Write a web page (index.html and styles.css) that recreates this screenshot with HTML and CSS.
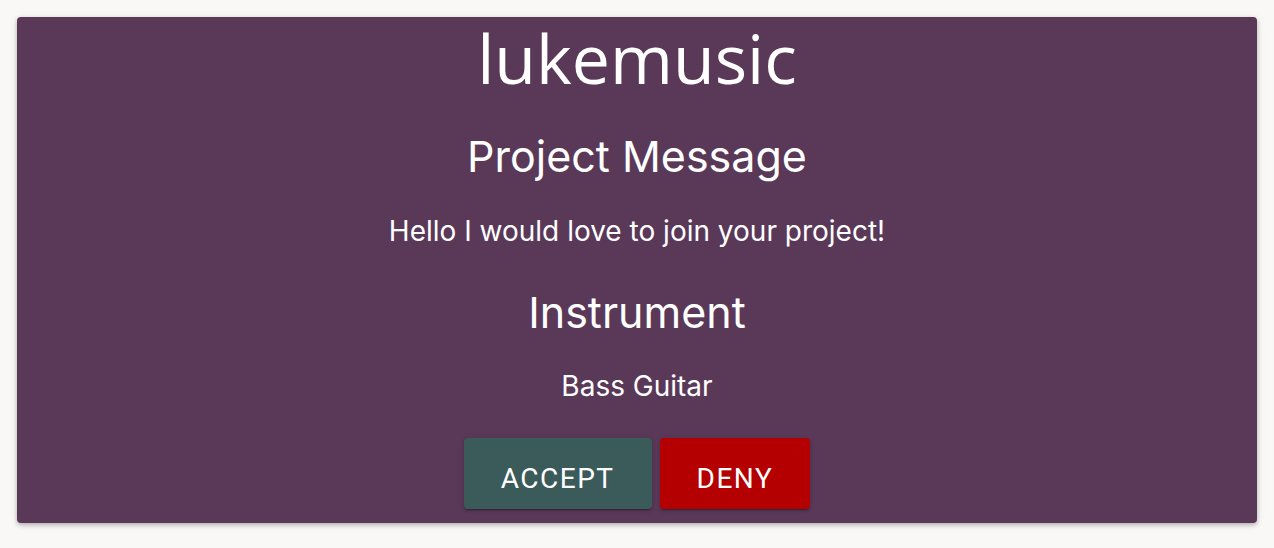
FILE: index.html
```html
<!DOCTYPE html>
<html lang="en">
<head>
<meta charset="utf-8">
<title>lukemusic - Project Message</title>
<link rel="stylesheet" href="styles.css">
</head>
<body>
<main class="page">
  <section class="card">
    <h1 class="brand">lukemusic</h1>
    <h2 class="heading heading-message">Project Message</h2>
    <p class="text text-message">Hello I would love to join your project!</p>
    <h2 class="heading heading-instrument">Instrument</h2>
    <p class="text text-instrument">Bass Guitar</p>
    <div class="actions">
      <button class="btn btn-accept">Accept</button>
      <button class="btn btn-deny">Deny</button>
    </div>
  </section>
</main>
</body>
</html>
```

FILE: styles.css
```css
* { box-sizing: border-box; }
html, body { margin: 0; padding: 0; }
body {
  background: #f9f8f7;
  font-family: Inter, "Liberation Sans", sans-serif;
  color: #fff;
}
.page {
  padding: 17px 17px 0 17px;
  height: 548px;
}
.card {
  background: #5a3858;
  border-radius: 4px;
  box-shadow: 0 2px 4px rgba(0,0,0,0.25), 0 1px 10px rgba(0,0,0,0.08);
  height: 506px;
  padding-top: 3px;
  display: flex;
  flex-direction: column;
  align-items: center;
  text-align: center;
}
.brand {
  margin: 0;
  font-family: "Open Sans", "Noto Sans", sans-serif;
  font-weight: 400;
  font-size: 68px;
  line-height: 76px;
}
.heading {
  margin: 0;
  font-weight: 400;
  font-size: 43px;
  line-height: 50px;
}
.heading-message { margin-top: 35px; }
.heading-instrument { margin-top: 39px; }
.text {
  margin: 0;
  font-weight: 400;
  font-size: 28px;
  line-height: 34px;
}
.text-message { margin-top: 33px; }
.text-instrument { margin-top: 32px; }
.actions {
  margin-top: 35px;
  display: flex;
  gap: 8px;
}
.btn {
  border: 0;
  border-radius: 4px;
  height: 71px;
  padding: 9px 37px 0 37px;
  color: #fff;
  font-family: Roboto, "Liberation Sans", sans-serif;
  font-weight: 400;
  font-size: 28px;
  letter-spacing: 1.5px;
  text-transform: uppercase;
  box-shadow: 0 3px 1px -2px rgba(0,0,0,0.2), 0 2px 2px 0 rgba(0,0,0,0.14), 0 1px 5px 0 rgba(0,0,0,0.12);
  cursor: pointer;
}
.btn-accept { background: #3b5a5a; }
.btn-deny { background: #b40000; }
```
